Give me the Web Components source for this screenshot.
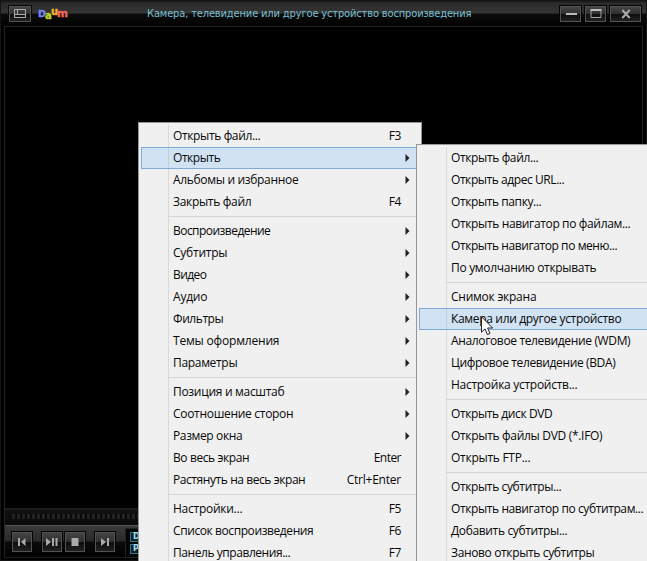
<!DOCTYPE html>
<html lang="ru">
<head>
<meta charset="utf-8">
<title>Плеер</title>
<style>
html,body{margin:0;height:100%;overflow:hidden;background:#000}
body{width:647px;height:561px;position:relative;font:12px/22px "Open Sans","Noto Sans",sans-serif;color:#080808}
popup-menu{position:absolute}
#main{left:138px;top:122px;width:284px;height:450px}
#sub{left:416px;top:144px;width:250px;height:430px}
mouse-cursor{position:absolute;left:481px;top:316px}
.caption{font:11px/16px "DejaVu Sans Condensed","DejaVu Sans",sans-serif;color:#7bbfd0}
</style>
</head>
<body>
<player-window>
  <fit-text class="caption" slot="title" w="324">Камера, телевидение или другое устройство воспроизведения</fit-text>
</player-window>
<popup-menu id="main">
  <menu-row w="87" key="F3" kw="12">Открыть файл...</menu-row>
  <menu-row w="47" sub hot>Открыть</menu-row>
  <menu-row w="125" sub>Альбомы и избранное</menu-row>
  <menu-row w="78" key="F4" kw="12">Закрыть файл</menu-row>
  <menu-line></menu-line>
  <menu-row w="97" sub>Воспроизведение</menu-row>
  <menu-row w="54" sub>Субтитры</menu-row>
  <menu-row w="33" sub>Видео</menu-row>
  <menu-row w="34" sub>Аудио</menu-row>
  <menu-row w="50" sub>Фильтры</menu-row>
  <menu-row w="106" sub>Темы оформления</menu-row>
  <menu-row w="64" sub>Параметры</menu-row>
  <menu-line></menu-line>
  <menu-row w="111" sub>Позиция и масштаб</menu-row>
  <menu-row w="120" sub>Соотношение сторон</menu-row>
  <menu-row w="69" sub>Размер окна</menu-row>
  <menu-row w="76" key="Enter" kw="27">Во весь экран</menu-row>
  <menu-row w="132" key="Ctrl+Enter" kw="54">Растянуть на весь экран</menu-row>
  <menu-line></menu-line>
  <menu-row w="69" key="F5" kw="12">Настройки...</menu-row>
  <menu-row w="140" key="F6" kw="12">Список воспроизведения</menu-row>
  <menu-row w="117" key="F7" kw="12">Панель управления...</menu-row>
</popup-menu>
<popup-menu id="sub">
  <menu-row w="87">Открыть файл...</menu-row>
  <menu-row w="113">Открыть адрес URL...</menu-row>
  <menu-row w="90">Открыть папку...</menu-row>
  <menu-row w="179">Открыть навигатор по файлам...</menu-row>
  <menu-row w="166">Открыть навигатор по меню...</menu-row>
  <menu-row w="145">По умолчанию открывать</menu-row>
  <menu-line></menu-line>
  <menu-row w="85">Снимок экрана</menu-row>
  <menu-row w="170" hot>Камера или другое устройство</menu-row>
  <menu-row w="179">Аналоговое телевидение (WDM)</menu-row>
  <menu-row w="164">Цифровое телевидение (BDA)</menu-row>
  <menu-row w="126">Настройка устройств...</menu-row>
  <menu-line></menu-line>
  <menu-row w="101">Открыть диск DVD</menu-row>
  <menu-row w="151">Открыть файлы DVD (*.IFO)</menu-row>
  <menu-row w="79">Открыть FTP...</menu-row>
  <menu-line></menu-line>
  <menu-row w="110">Открыть субтитры...</menu-row>
  <menu-row w="192">Открыть навигатор по субтитрам...</menu-row>
  <menu-row w="116">Добавить субтитры...</menu-row>
  <menu-row w="143">Заново открыть субтитры</menu-row>
</popup-menu>
<mouse-cursor></mouse-cursor>
<script>
const define=(name,html,init)=>customElements.define(name,class extends HTMLElement{
  connectedCallback(){
    if(this.shadowRoot)return;
    this.attachShadow({mode:'open'}).innerHTML=html;
    if(init)init.call(this,this.shadowRoot);
  }
});

/* Text run whose letter spacing is adjusted to a given width */
define('fit-text','<style>:host{display:inline-block;white-space:nowrap}span{display:inline-block}</style><span><slot></slot></span>',function(r){
  const s=r.querySelector('span'),w=+this.getAttribute('w');
  const natural=s.getBoundingClientRect().width,n=this.textContent.length;
  if(w&&natural)s.style.letterSpacing=((w+.3-natural)/n)+'px';
});

define('menu-line','<style>:host{display:block;height:7px;margin-left:27px;box-sizing:border-box}i{display:block;height:1px;background:#d4d4d4;transform:translateY(3px)}</style><i></i>');

define('menu-row',`<style>
:host{display:flex;box-sizing:border-box;height:22px;padding:0 8px 0 31px;border:1px solid transparent;align-items:center;line-height:20px}
:host([hot]){background:linear-gradient(#b9d0e4,#b9d0e4) 26px 0/1px 100% no-repeat,#d1e3f3;border-color:#7fabd9}
.key{margin-left:auto;margin-right:9px}
svg{display:none;margin-left:auto}
:host([sub]) svg{display:block}
:host([sub]) .key{display:none}
</style><fit-text class="label"></fit-text><fit-text class="key"></fit-text>
<svg width="5" height="8" viewBox="0 0 5 8"><path d="M.5 0L4.5 4L.5 8z" fill="#222"/></svg>`,function(r){
  const fill=(sel,text,w)=>{
    const old=r.querySelector(sel),el=document.createElement('fit-text');
    el.className=old.className;el.textContent=text;el.setAttribute('w',w);
    old.replaceWith(el);
  };
  fill('.label',this.textContent.trim(),this.getAttribute('w'));
  if(this.hasAttribute('key'))fill('.key',this.getAttribute('key'),this.getAttribute('kw'));
});

define('popup-menu',`<style>
:host{display:block;box-sizing:border-box;border:1px solid #979797;padding:2px;
background:linear-gradient(#d9d9d9,#d9d9d9) 29px 2px/1px 100% no-repeat,#f0f0f0}
</style><slot></slot>`);

define('mouse-cursor',`<style>:host{display:block;width:13px;height:20px}svg{display:block}</style>
<svg width="13" height="20" viewBox="0 0 13 20"><path d="M.5.8V16.2L4 12.9L6.4 18.6L9 17.5L6.6 12H11.6z" fill="#fff" stroke="#222"/></svg>`);

define('skin-button',`<style>
:host{display:flex;box-sizing:border-box;align-items:center;justify-content:center;border:1px solid #050505;
box-shadow:inset 0 0 0 1px #525252;background:linear-gradient(#464646 0,#303030 49%,#0d0d0d 50%,#232323)}
</style><slot></slot>`);

define('daum-logo',`<style>
:host{display:flex;width:29px;height:12px;font:bold 11px/7px "DejaVu Sans",sans-serif}
span{display:block;height:7px;-webkit-text-stroke:.4px currentColor}
.d{color:#7883ee;font-size:9.5px;width:7px;margin-top:3px}
.a{color:#bcd72b;width:6px;font-size:10px;margin-top:5px}
.u{color:#f3b12c;width:6px;font-size:10px;margin-top:1px}
.m{color:#ed685c;width:10px;margin-top:3px;font-size:10.5px}
</style><span class="d">D</span><span class="a">a</span><span class="u">u</span><span class="m">m</span>`);

define('player-window',`<style>
:host{display:flex;flex-direction:column;box-sizing:border-box;width:647px;height:561px;background:#000;border:1px solid #141414}
header{display:flex;box-sizing:border-box;height:25px;padding:4px 4px 0 7px;
background:linear-gradient(#191919 0,#2a2a2a 2px,#353535 12px,#0c0c0c 13px,#020202 25px)}
header skin-button{height:18px;flex:none}
daum-logo{margin:2px 0 0 6px}
.title{flex:1;margin-left:80px;padding-top:1px;line-height:16px;display:flex;align-items:flex-start}
.caps{display:flex;gap:2px;margin-top:0}
main{flex:1;margin:0 3px 2px;display:flex;flex-direction:column;border:1px solid #222;border-bottom-color:#1b1b1b}
.video{flex:1;background:#000}
.seek{height:17px;box-sizing:border-box;padding:5px 7px;background:linear-gradient(#1c1c1c 0,#101010 2px,#090909);border-top:1px solid #1d1d1d}
.seek i{display:block;height:5px;background:repeating-linear-gradient(90deg,#222 0 3px,#0a0a0a 3px 5px)}
footer{display:flex;height:32px;padding:5px 0 0 6px;box-sizing:border-box;border-top:1px solid #555;
background:linear-gradient(#3a3a3a 0,#292929 15px,#0b0b0b 16px,#020202)}
footer skin-button{width:22px;height:22px}
footer skin-button+skin-button{margin-left:8px}
footer skin-button.near{margin-left:1px}
.lcd{margin:-3px 0 0 9px;width:500px;height:30px;box-sizing:border-box;padding:3px 4px;background:#030606;border:1px solid #222;display:flex;flex-direction:column;gap:2px}
.lcd b{box-sizing:border-box;width:30px;height:10px;border:1px solid #3a7280;padding-left:2px;font:bold 8px/8px "DejaVu Sans",sans-serif;color:#a4dce8;background:#0b2229}
svg{display:block}
</style>
<header>
  <skin-button style="width:24px"><svg width="12" height="10" viewBox="0 0 12 10" fill="none" stroke="#aaa"><path d="M.5.5h11v8H.5zM3.5.5v5M.5 5.5h11"/></svg></skin-button>
  <daum-logo></daum-logo>
  <div class="title"><slot name="title"></slot></div>
  <div class="caps">
    <skin-button style="width:23px"><svg width="12" height="4"><path d="M1 1h11v2H1z" fill="#bbb"/></svg></skin-button>
    <skin-button style="width:23px"><svg width="12" height="10"><path d="M1 1.5h10v7H1z" fill="none" stroke="#a5a5a5"/><path d="M.5 1h11" stroke="#bbb" stroke-width="2"/></svg></skin-button>
    <skin-button style="width:33px"><svg width="10" height="10"><path d="M1.3 1L8.700 9M8.700 1L1.300 9" stroke="#aaa" stroke-width="2"/></svg></skin-button>
  </div>
</header>
<main>
  <div class="video"></div>
  <div class="seek"><i></i></div>
  <footer>
    <skin-button><svg width="8" height="8" fill="#aaa"><path d="M0 0h2v8H0zM7.500 0v8L3 4z"/></svg></skin-button>
    <skin-button><svg width="12" height="8" fill="#aaa"><path d="M0 0L5 4L0 8zM6 0h2v8H6zM9.500 0h2v8h-2z"/></svg></skin-button>
    <skin-button class="near"><svg width="8" height="8" fill="#aaa"><path d="M.5 0h7v8h-7z"/></svg></skin-button>
    <skin-button><svg width="8" height="8" fill="#aaa"><path d="M0 0L5 4L0 8zM6 0h2v8H6z"/></svg></skin-button>
    <div class="lcd"><b>D</b><b>P</b></div>
  </footer>
</main>`);
</script>
</body>
</html>
